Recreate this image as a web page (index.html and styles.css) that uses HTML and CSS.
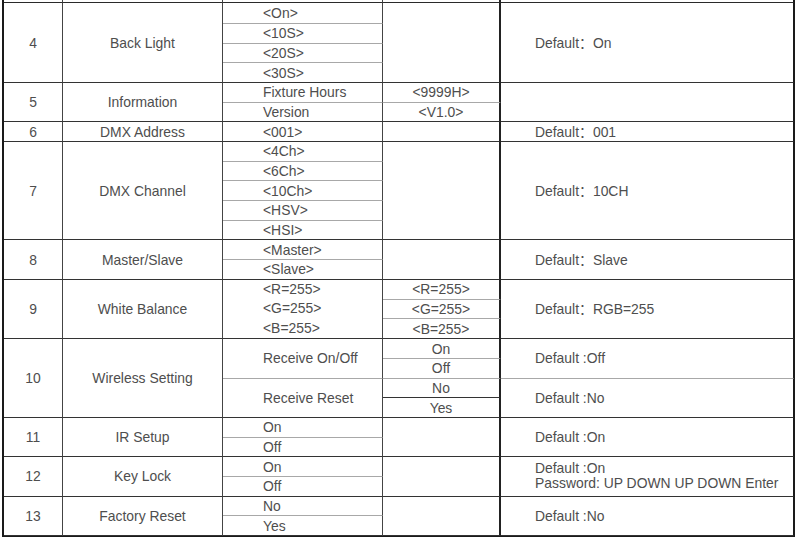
FILE: index.html
```html
<!DOCTYPE html>
<html>
<head>
<meta charset="utf-8">
<link rel="stylesheet" href="styles.css">
</head>
<body>
<table class="menu">
  <tr class="stub">
    <td class="w1"></td><td class="w2"></td><td class="w3"></td><td class="w4 c4"></td><td class="w5"></td>
  </tr>
  <tr class="first">
    <td rowspan="4" class="num">4</td><td rowspan="4" class="name">Back Light</td><td class="opt sub">&lt;On&gt;</td><td rowspan="4" class="c4"></td><td rowspan="4" class="def">Default：On</td>
  </tr>
  <tr><td class="opt sub">&lt;10S&gt;</td></tr>
  <tr><td class="opt sub">&lt;20S&gt;</td></tr>
  <tr><td class="opt">&lt;30S&gt;</td></tr>

  <tr>
    <td rowspan="2" class="num">5</td><td rowspan="2" class="name">Information</td><td class="opt sub">Fixture Hours</td><td class="val c4 sub">&lt;9999H&gt;</td><td rowspan="2" class="def"></td>
  </tr>
  <tr><td class="opt">Version</td><td class="val c4">&lt;V1.0&gt;</td></tr>

  <tr>
    <td class="num">6</td><td class="name">DMX Address</td><td class="opt">&lt;001&gt;</td><td class="c4"></td><td class="def">Default：001</td>
  </tr>

  <tr>
    <td rowspan="5" class="num">7</td><td rowspan="5" class="name">DMX Channel</td><td class="opt sub">&lt;4Ch&gt;</td><td rowspan="5" class="c4"></td><td rowspan="5" class="def">Default：10CH</td>
  </tr>
  <tr><td class="opt sub">&lt;6Ch&gt;</td></tr>
  <tr><td class="opt sub">&lt;10Ch&gt;</td></tr>
  <tr><td class="opt sub">&lt;HSV&gt;</td></tr>
  <tr><td class="opt">&lt;HSI&gt;</td></tr>

  <tr>
    <td rowspan="2" class="num">8</td><td rowspan="2" class="name">Master/Slave</td><td class="opt sub">&lt;Master&gt;</td><td rowspan="2" class="c4"></td><td rowspan="2" class="def">Default：Slave</td>
  </tr>
  <tr><td class="opt">&lt;Slave&gt;</td></tr>

  <tr>
    <td rowspan="3" class="num">9</td><td rowspan="3" class="name">White Balance</td><td rowspan="3" class="opt stack">&lt;R=255&gt;<br>&lt;G=255&gt;<br>&lt;B=255&gt;</td><td class="val c4 sub">&lt;R=255&gt;</td><td rowspan="3" class="def">Default：RGB=255</td>
  </tr>
  <tr><td class="val c4 sub">&lt;G=255&gt;</td></tr>
  <tr><td class="val c4">&lt;B=255&gt;</td></tr>

  <tr>
    <td rowspan="4" class="num">10</td><td rowspan="4" class="name">Wireless Setting</td><td rowspan="2" class="opt sub">Receive On/Off</td><td class="val c4 sub">On</td><td rowspan="2" class="def sub">Default :Off</td>
  </tr>
  <tr><td class="val c4 sub">Off</td></tr>
  <tr><td rowspan="2" class="opt">Receive Reset</td><td class="val c4">No</td><td rowspan="2" class="def">Default :No</td></tr>
  <tr><td class="val c4">Yes</td></tr>

  <tr>
    <td rowspan="2" class="num">11</td><td rowspan="2" class="name">IR Setup</td><td class="opt sub">On</td><td rowspan="2" class="c4"></td><td rowspan="2" class="def">Default :On</td>
  </tr>
  <tr><td class="opt">Off</td></tr>

  <tr>
    <td rowspan="2" class="num">12</td><td rowspan="2" class="name">Key Lock</td><td class="opt sub">On</td><td rowspan="2" class="c4"></td><td rowspan="2" class="def two">Default :On<br>Password: UP DOWN UP DOWN Enter</td>
  </tr>
  <tr><td class="opt">Off</td></tr>

  <tr>
    <td rowspan="2" class="num">13</td><td rowspan="2" class="name">Factory Reset</td><td class="opt sub">No</td><td rowspan="2" class="c4"></td><td rowspan="2" class="def">Default :No</td>
  </tr>
  <tr><td class="opt">Yes</td></tr>
</table>
</body>
</html>
```

FILE: styles.css
```css
html, body {
  margin: 0;
  padding: 0;
  background: #ffffff;
}

body {
  padding-left: 2px;
  font-family: "Liberation Sans", "Noto Sans CJK SC", sans-serif;
  font-size: 13.9px;
  color: #4e4e4e;
}

.menu {
  table-layout: fixed;
  width: 793px;
  border-collapse: separate;
  border-spacing: 0;
  border-left: 2px solid #1a1a1a;
  border-right: 1px solid #1a1a1a;
  border-bottom: 1px solid #1a1a1a;
}

.menu td {
  box-sizing: border-box;
  padding: 0;
  line-height: 16px;
  vertical-align: middle;
  white-space: nowrap;
  border-right: 1px solid #444444;
  border-bottom: 1px solid #333333;
}

.menu tr {
  height: 19.68px;
}

.menu tr.stub {
  height: 3px;
}

.menu tr.stub td {
  line-height: 0;
  font-size: 0;
  border-bottom-color: #2a2a2a;
}

.menu tr.first {
  height: 21px;
}

.w1 { width: 59px; }
.w2 { width: 160px; }
.w3 { width: 160px; }
.w4 { width: 118px; }
.w5 { width: 293px; }

.menu td.c4 {
  border-right: 2px solid #222222;
}

.menu td.w5,
.menu td.def {
  border-right-color: #1a1a1a;
}

.menu td.sub {
  border-bottom-color: #a8a8a8;
}

.num,
.name,
.val {
  text-align: center;
}

.opt {
  text-align: left;
  padding-left: 40px !important;
}

.stack {
  line-height: 19.5px !important;
}

.def {
  text-align: left;
  padding-left: 34px !important;
}

.two {
  line-height: 15px !important;
}
```
